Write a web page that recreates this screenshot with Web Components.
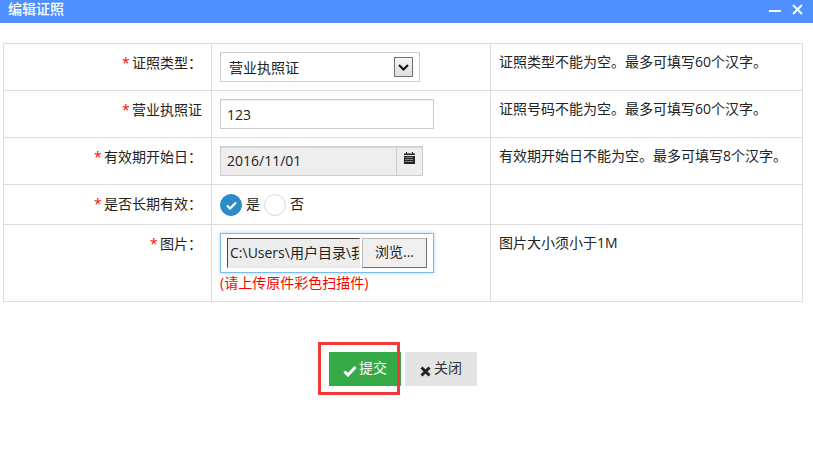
<!DOCTYPE html>
<html lang="zh">
<head>
<meta charset="utf-8">
<title>编辑证照</title>
<style>
    html, body{ margin:0; height:100%; background:#fff; }
    body{ font: 14px/20px "Open Sans", "Noto Sans CJK SC", sans-serif; color:#222; overflow:hidden; }
</style>
</head>
<body>

<i-dialog heading="编辑证照">
    <i-form-table>
        <i-form-row label="证照类型：" required height="46" hint="证照类型不能为空。最多可填写60个汉字。">
            <i-select value="营业执照证"></i-select>
        </i-form-row>
        <i-form-row label="营业执照证" required height="46" hint="证照号码不能为空。最多可填写60个汉字。">
            <i-text-input value="123"></i-text-input>
        </i-form-row>
        <i-form-row label="有效期开始日：" required height="46" hint="有效期开始日不能为空。最多可填写8个汉字。">
            <i-date-input value="2016/11/01"></i-date-input>
        </i-form-row>
        <i-form-row label="是否长期有效：" required height="39">
            <i-radio checked>是</i-radio>
            <i-radio>否</i-radio>
        </i-form-row>
        <i-form-row label="图片：" required height="76" hint="图片大小须小于1M">
            <i-file-input value="C:\Users\用户目录\我" note="(请上传原件彩色扫描件)"></i-file-input>
        </i-form-row>
    </i-form-table>
    <i-actions>
        <i-button kind="primary" icon="check" outlined>提交</i-button>
        <i-button icon="cross">关闭</i-button>
    </i-actions>
</i-dialog>

<script>
class Dialog extends HTMLElement{
    constructor(){
        super();
        this.$ = this.attachShadow({mode: 'open'})
        this.$.innerHTML = `
            <style>
                :host{
                    display:block;
                }
                header{
                    height: 23px;
                    background: #4f8fff;
                    color: #fff;
                    display: flex;
                    align-items: center;
                    padding: 0 5px 0 8px;
                    font-size: 14px;
                    font-weight: 500;
                }
                .title{
                    position: relative;
                    top: -3px;
                }
                .tools{
                    margin-left: auto;
                    display: flex;
                    align-items: flex-start;
                    gap: 11px;
                    padding-right: 5px;
                    height: 23px;
                }
                svg{
                    display: block;
                }
                .min{
                    margin-top: 5px;
                }
                .close{
                    margin-top: 4px;
                }
                .content{
                    padding: 20px 10px 0 3px;
                }
            </style>
            <header>
                <span class="title"></span>
                <div class="tools">
                    <svg class="min" width="12" height="12" viewBox="0 0 12 12"><path d="M0 5h12v2H0z" fill="#fff"/></svg>
                    <svg class="close" width="11" height="11" viewBox="0 0 11 11"><path d="M1 1l9 9M10 1l-9 9" stroke="#fff" stroke-width="2" fill="none"/></svg>
                </div>
            </header>
            <div class="content"><slot></slot></div>
        `;
    }
    connectedCallback(){
        this.$.querySelector('.title').textContent = this.getAttribute('heading');
    }
}
customElements.define('i-dialog', Dialog)

class FormTable extends HTMLElement{
    constructor(){
        super();
        this.attachShadow({mode: 'open'}).innerHTML = `
            <style>
                :host{
                    display:block;
                    border: 1px solid #ddd;
                    border-bottom: 0;
                }
            </style>
            <slot></slot>
        `;
    }
}
customElements.define('i-form-table', FormTable)

class FormRow extends HTMLElement{
    constructor(){
        super();
        this.attachShadow({mode: 'open'}).innerHTML = `
            <style>
                :host{
                    display:grid;
                    grid-template-columns: 207px 280px 1fr;
                    border-bottom: 1px solid #ddd;
                    box-sizing: content-box;
                }
                .label{
                    text-align: right;
                    padding: 9px 9px 0 0;
                }
                .label b{
                    display: inline-block;
                    width: 10px;
                    text-align: left;
                    color: #f00;
                    font-weight: normal;
                }
                .control{
                    border-left: 1px solid #ddd;
                    border-right: 1px solid #ddd;
                    padding: 8px 8px 0;
                    display: flex;
                    align-items: flex-start;
                    gap: 4px;
                }
                .hint{
                    padding: 8px 8px 0 8px;
                }
            </style>
            <div class="label"></div>
            <div class="control"><slot></slot></div>
            <div class="hint"></div>
        `;
    }
    connectedCallback(){
        const $ = this.shadowRoot;
        this.style.height = this.getAttribute('height') + 'px';
        $.querySelector('.label').innerHTML = (this.hasAttribute('required') ? '<b>*</b>' : '') + this.getAttribute('label');
        $.querySelector('.hint').textContent = this.getAttribute('hint') || '';
    }
}
customElements.define('i-form-row', FormRow)

class SelectBox extends HTMLElement{
    constructor(){
        super();
        this.attachShadow({mode: 'open'}).innerHTML = `
            <style>
                :host{
                    display:flex;
                    align-items: center;
                    box-sizing: border-box;
                    width: 200px;
                    height: 30px;
                    border: 1px solid #ccc;
                    padding: 2px 6px 0 8px;
                }
                .arrow{
                    margin: -2px 0 0 auto;
                    width: 17px;
                    height: 18px;
                    border: 1px solid #707070;
                    background: linear-gradient(#f6f6f6, #dedede);
                    display: flex;
                    align-items: center;
                    justify-content: center;
                }
            </style>
            <span class="v"></span>
            <span class="arrow">
                <svg width="11" height="7" viewBox="0 0 11 7"><path d="M1 1l4.500 4.500L10 1" stroke="#111" stroke-width="2" fill="none"/></svg>
            </span>
        `;
    }
    connectedCallback(){
        this.shadowRoot.querySelector('.v').textContent = this.getAttribute('value');
    }
}
customElements.define('i-select', SelectBox)

class TextInput extends HTMLElement{
    constructor(){
        super();
        this.attachShadow({mode: 'open'}).innerHTML = `
            <style>
                :host{
                    display:block;
                    box-sizing: border-box;
                    width: 214px;
                    height: 30px;
                    border: 1px solid #ccc;
                    padding: 5px 6px;
                    box-shadow: inset 0 1px 1px rgba(0,0,0,.075);
                }
            </style>
            <span class="v"></span>
        `;
    }
    connectedCallback(){
        this.shadowRoot.querySelector('.v').textContent = this.getAttribute('value');
    }
}
customElements.define('i-text-input', TextInput)

class DateInput extends HTMLElement{
    constructor(){
        super();
        this.attachShadow({mode: 'open'}).innerHTML = `
            <style>
                :host{
                    display:flex;
                    box-sizing: border-box;
                    width: 203px;
                    height: 30px;
                    border: 1px solid #ccc;
                    background: #eee;
                    box-shadow: inset 0 1px 1px rgba(0,0,0,.075);
                }
                .v{
                    flex: 1;
                    padding: 4px 6px;
                }
                .addon{
                    width: 25px;
                    border-left: 1px solid #ccc;
                    display: flex;
                    justify-content: center;
                    padding-top: 5px;
                }
            </style>
            <span class="v"></span>
            <span class="addon">
                <svg width="11" height="12" viewBox="0 0 11 12" fill="#222">
                    <path fill-rule="evenodd" d="M2 0h1v1.500h5V0h1v1.500h2V3H0V1.500h2zM0 4h11v8H0zM1.500 5v1h1V5zM3.500 5v1h1V5zM5.500 5v1h1V5zM7.500 5v1h1V5zM1.500 7v1h1V7zM3.500 7v1h1V7zM5.500 7v1h1V7zM7.500 7v1h1V7zM1.500 9v1h1V9zM3.500 9v1h1V9zM5.500 9v1h1V9zM7.500 9v1h1V9z"/>
                </svg>
            </span>
        `;
    }
    connectedCallback(){
        this.shadowRoot.querySelector('.v').textContent = this.getAttribute('value');
    }
}
customElements.define('i-date-input', DateInput)

class Radio extends HTMLElement{
    constructor(){
        super();
        this.attachShadow({mode: 'open'}).innerHTML = `
            <style>
                :host{
                    display:inline-flex;
                    align-items: center;
                    gap: 4px;
                    height: 22px;
                    margin-top: 1px;
                }
                .dot{
                    box-sizing: border-box;
                    width: 22px;
                    height: 22px;
                    border-radius: 50%;
                    border: 1px solid #d8d8d8;
                    background: #fff;
                    display: flex;
                    align-items: center;
                    justify-content: center;
                }
                .dot svg{
                    display: none;
                }
                :host([checked]) .dot{
                    background: #2b8cc9;
                    border-color: #2b8cc9;
                }
                :host([checked]) .dot svg{
                    display: block;
                }
                .text{
                    position: relative;
                    top: -1px;
                }
            </style>
            <span class="dot">
                <svg width="11" height="9" viewBox="0 0 11 9"><path d="M1 4.500l3 3 6-6" stroke="#fff" stroke-width="2.200" fill="none"/></svg>
            </span>
            <span class="text"><slot></slot></span>
        `;
    }
}
customElements.define('i-radio', Radio)

class FileInput extends HTMLElement{
    constructor(){
        super();
        this.attachShadow({mode: 'open'}).innerHTML = `
            <style>
                :host{
                    display:block;
                    width: 214px;
                }
                .box{
                    box-sizing: border-box;
                    height: 40px;
                    border: 1px solid #7cb9ee;
                    box-shadow: 0 0 4px rgba(102,175,233,.5);
                    padding: 4px 6px;
                    display: flex;
                    gap: 2px;
                }
                .path{
                    box-sizing: border-box;
                    width: 133px;
                    height: 30px;
                    border: 1px solid #e6e6e6;
                    border-top: 1px solid #444;
                    border-left: 1px solid #444;
                    background: #ededed;
                    padding: 4px 0 0 2px;
                    overflow: hidden;
                    white-space: nowrap;
                }
                .btn{
                    box-sizing: border-box;
                    width: 65px;
                    height: 30px;
                    border: 1px solid #707070;
                    border-top-color: #bbb;
                    border-left-color: #bbb;
                    background: #f0f0f0;
                    text-align: center;
                    line-height: 26px;
                }
                .note{
                    color: #f00;
                    margin-top: 0;
                    white-space: nowrap;
                }
            </style>
            <div class="box">
                <div class="path"></div>
                <div class="btn">浏览...</div>
            </div>
            <div class="note"></div>
        `;
    }
    connectedCallback(){
        this.shadowRoot.querySelector('.path').textContent = this.getAttribute('value');
        this.shadowRoot.querySelector('.note').textContent = this.getAttribute('note');
    }
}
customElements.define('i-file-input', FileInput)

class Actions extends HTMLElement{
    constructor(){
        super();
        this.attachShadow({mode: 'open'}).innerHTML = `
            <style>
                :host{
                    display:flex;
                    justify-content: flex-start;
                    gap: 4px;
                    padding: 50px 0 0 326px;
                }
            </style>
            <slot></slot>
        `;
    }
}
customElements.define('i-actions', Actions)

const BUTTON_ICONS = {
    check: '<svg width="14" height="12" viewBox="0 0 14 12"><path d="M1.500 6.500l3.500 3.500 7.500-8" stroke="#fff" stroke-width="3" fill="none"/></svg>',
    cross: '<svg width="11" height="11" viewBox="0 0 11 11"><path d="M1.500 1.500l8 8M9.500 1.500l-8 8" stroke="#222" stroke-width="3" fill="none"/></svg>'
}

class Button extends HTMLElement{
    constructor(){
        super();
        this.attachShadow({mode: 'open'}).innerHTML = `
            <style>
                :host{
                    display:flex;
                    position: relative;
                    align-items: center;
                    justify-content: center;
                    gap: 3px;
                    width: 72px;
                    height: 34px;
                    background: #e4e4e4;
                    color: #333;
                }
                :host([kind=primary]){
                    background: #35aa47;
                    color: #fff;
                    gap: 2px;
                }
                .icon{
                    position: relative;
                    top: 2px;
                    display: flex;
                }
                .label{
                    position: relative;
                    top: -1px;
                }
                .mark{
                    display: none;
                    position: absolute;
                    left: -11px;
                    top: -10px;
                    width: 82px;
                    height: 53px;
                    box-sizing: border-box;
                    border: 3px solid #f03a3a;
                }
                :host([outlined]) .mark{
                    display: block;
                }
            </style>
            <span class="icon"></span>
            <span class="label"><slot></slot></span>
            <span class="mark"></span>
        `;
    }
    connectedCallback(){
        this.shadowRoot.querySelector('.icon').innerHTML = BUTTON_ICONS[this.getAttribute('icon')] || '';
    }
}
customElements.define('i-button', Button)
</script>
</body>
</html>
